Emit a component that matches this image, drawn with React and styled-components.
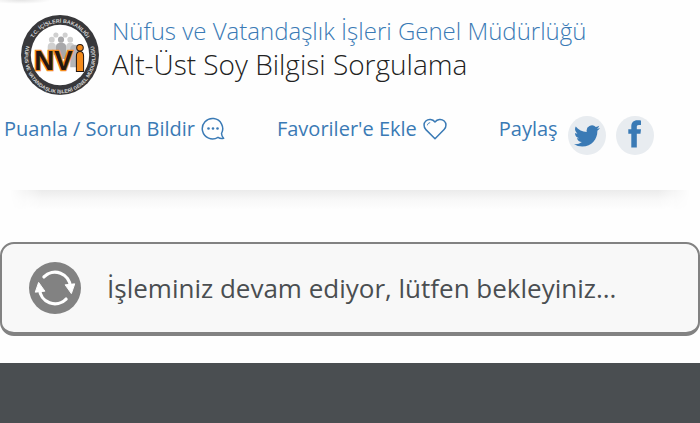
import React from "react";
import styled, { createGlobalStyle } from "styled-components";

const GlobalStyle = createGlobalStyle`
  * {
    box-sizing: border-box;
  }

  html, body, #root {
    height: 100%;
  }

  body {
    margin: 0;
    background: #fefefe;
    color: #4a4e51;
    font-family: "Open Sans", "Noto Sans", sans-serif;
  }
`;

const Logo = () => (
  <LogoSvg viewBox="0 0 78 80" role="img" aria-label="NVİ">
    <defs>
      <path id="ringTop" d="M8.500 40 A30.500 31.500 0 0 1 69.500 40" />
      <path id="ringBottom" d="M6.500 30 A34.500 35.500 0 1 0 71.500 30" />
    </defs>
    <ellipse cx="39" cy="40" rx="38" ry="39" fill="#38383b" />
    <ellipse cx="39" cy="40" rx="28.500" ry="29.500" fill="#fff" />
    <g fill="#d8d8d8" fontFamily="Liberation Sans, sans-serif" fontWeight="700" textAnchor="middle">
      <text fontSize="5.200">
        <textPath href="#ringTop" startOffset="50%">T.C. İÇİŞLERİ BAKANLIĞI</textPath>
      </text>
      <text fontSize="5">
        <textPath href="#ringBottom" startOffset="50%">NÜFUS VE VATANDAŞLIK İŞLERİ GENEL MÜDÜRLÜĞÜ</textPath>
      </text>
    </g>
    <g fill="#d0d0d0">
      <circle cx="35" cy="20.500" r="2.500" />
      <circle cx="44" cy="20.500" r="2.500" />
      <circle cx="31" cy="25" r="2.800" />
      <circle cx="49" cy="25" r="2.800" />
      <path d="M27 40V32q0-4 4-4t4 4v8zM45 40V32q0-4 4-4t4 4v8z" />
    </g>
    <g fill="#a8a8aa">
      <circle cx="40" cy="25" r="3" />
      <path d="M35 44V32q0-4 5-4t5 4v12z" />
    </g>
    <path d="M49 34q0-4 4.500-4t4.500 4v18H49z" fill="#b5b5b7" />
    <text
      x="14"
      y="55"
      fill="#241611"
      stroke="#f28a1c"
      strokeWidth="2.400"
      paintOrder="stroke"
      fontFamily="Liberation Sans, sans-serif"
      fontWeight="700"
      fontSize="27"
    >
      NV
    </text>
    <circle cx="58.500" cy="33" r="3.200" fill="#f28a1c" stroke="#241611" strokeWidth="1" />
    <path d="M55 56V41q0-4.500 3.500-4.500t3.500 4.500v15z" fill="#f28a1c" stroke="#241611" strokeWidth="1" />
  </LogoSvg>
);

const CommentIcon = () => (
  <LineIcon viewBox="0 0 24 24" aria-hidden="true">
    <path d="M20.500 16.500A10.200 10.200 0 1 0 17 20.300C18.700 21.500 20.800 21.800 22.600 21.300C21.300 20 20.600 18.500 20.500 16.500Z" />
    <g fill="currentColor" stroke="none">
      <circle cx="7.500" cy="11.500" r="1.300" />
      <circle cx="12" cy="11.500" r="1.300" />
      <circle cx="16.500" cy="11.500" r="1.300" />
    </g>
  </LineIcon>
);

const HeartIcon = () => (
  <LineIcon viewBox="0 0 24 24" aria-hidden="true">
    <path d="M12 21.800L2.900 12.600C0.300 9.900 0.600 6 2.800 4C5.500 1.600 9.700 2 12 5C14.300 2 18.500 1.600 21.200 4C23.400 6 23.700 9.900 21.100 12.600Z" />
    <path d="M4.400 8.300C4.600 6.700 5.600 5.800 7.200 5.700" strokeWidth="1" />
  </LineIcon>
);

const TwitterIcon = () => (
  <svg width="26" height="26" viewBox="0 0 24 24" fill="currentColor" aria-hidden="true">
    <path d="M23.950 4.570a10 10 0 0 1-2.820.77 4.960 4.960 0 0 0 2.160-2.720c-.95.55-2 .95-3.130 1.180a4.920 4.920 0 0 0-8.380 4.480C7.690 8.090 4.070 6.130 1.640 3.160a4.920 4.920 0 0 0 1.520 6.570 4.900 4.900 0 0 1-2.230-.61v.06a4.920 4.920 0 0 0 3.950 4.830 5 5 0 0 1-2.210.08 4.940 4.940 0 0 0 4.600 3.420A9.870 9.870 0 0 1 0 19.540a13.990 13.990 0 0 0 7.560 2.210c9.050 0 14-7.500 14-13.980 0-.21 0-.42-.02-.63a9.940 9.940 0 0 0 2.410-2.570z" />
  </svg>
);

const FacebookIcon = () => (
  <svg width="14" height="32" viewBox="0 0 14 32" fill="currentColor" aria-hidden="true">
    <path d="M13 .5V5H10.800C9.200 5 8.800 5.700 8.800 7V9.300H13L12.500 13.700H8.800V27.500H3.300V13.700H.3V9.300H3.300V6.400C3.300 2.500 5.700 .3 9.300 .3C11 .3 12.500 .4 13 .5Z" />
  </svg>
);

const RefreshIcon = () => (
  <SpinnerSvg viewBox="0 0 54 54" aria-hidden="true">
    <circle cx="27" cy="27" r="27" fill="#828282" />
    <g fill="none" stroke="#fff" strokeWidth="3.400" strokeLinecap="round">
      <path d="M15.500 15.500A16 16 0 0 1 43 26" />
      <path d="M38.500 38.500A16 16 0 0 1 11 28" />
    </g>
    <path d="M37.500 23.700L47.500 22.700L44 32.800Z" fill="#fff" stroke="#fff" strokeLinejoin="round" />
    <path d="M16.500 30.300L6.500 31.300L10 21.200Z" fill="#fff" stroke="#fff" strokeLinejoin="round" />
  </SpinnerSvg>
);

export default function App() {
  return (
    <Page>
      <GlobalStyle />
      <Header>
        <Logo />
        <Titles>
          <Agency href="#">Nüfus ve Vatandaşlık İşleri Genel Müdürlüğü</Agency>
          <Service>Alt-Üst Soy Bilgisi Sorgulama</Service>
        </Titles>
      </Header>
      <Actions>
        <Action type="button">
          Puanla / Sorun Bildir <CommentIcon />
        </Action>
        <Action type="button">
          Favoriler'e Ekle <HeartIcon />
        </Action>
        <Share>
          <span>Paylaş</span>
          <ShareLink href="#" aria-label="Twitter">
            <TwitterIcon />
          </ShareLink>
          <ShareLink href="#" aria-label="Facebook">
            <FacebookIcon />
          </ShareLink>
        </Share>
      </Actions>
      <Divider />
      <Notice role="status">
        <RefreshIcon />
        <p>İşleminiz devam ediyor, lütfen bekleyiniz...</p>
      </Notice>
      <Footer />
    </Page>
  );
}

const Page = styled.div`
  min-height: 100%;
  display: flex;
  flex-direction: column;
  background: radial-gradient(ellipse at 40% 0, #e4e4e4, transparent 70%) 0 0 / 52px 4px no-repeat;
`;

const Header = styled.header`
  display: flex;
  gap: 12px;
  padding: 14px 20px 0;
`;

const LogoSvg = styled.svg`
  width: 80px;
  height: 82px;
  flex-shrink: 0;
`;

const Titles = styled.div`
  display: flex;
  flex-direction: column;
  font-weight: 300;
`;

const Agency = styled.a`
  color: #3a7ab5;
  font-size: 24px;
  line-height: 34px;
  text-decoration: none;
`;

const Service = styled.h1`
  margin: 0;
  color: #222;
  font-size: 28px;
  font-weight: 300;
  line-height: 32px;
`;

const Actions = styled.div`
  display: flex;
  align-items: flex-start;
  gap: 52px;
  padding: 20px 4px 0;
  color: #3a7ab5;
  font-size: 20px;
  line-height: 26px;
`;

const Action = styled.button`
  display: flex;
  align-items: center;
  gap: 6px;
  padding: 0;
  border: 0;
  background: none;
  color: inherit;
  font: inherit;
  cursor: pointer;
`;

const LineIcon = styled.svg`
  width: 24px;
  height: 24px;
  fill: none;
  stroke: currentColor;
  stroke-width: 1.5;
  stroke-linejoin: round;
`;

const Share = styled.div`
  display: flex;
  gap: 10px;
`;

const ShareLink = styled.a`
  display: flex;
  align-items: center;
  justify-content: center;
  width: 38px;
  height: 39px;
  border-radius: 50%;
  background: #e8ecf0;
  color: #3a7ab5;
`;

const Divider = styled.div`
  height: 20px;
  margin: 35px 10px 0;
  background: linear-gradient(#ebebeb, #f8f8f8 50%, #fefefe);
  mask-image: linear-gradient(to right, transparent, #000 32px, #000 calc(100% - 32px), transparent);
`;

const Notice = styled.section`
  display: flex;
  align-items: center;
  gap: 26px;
  margin-top: 32px;
  padding: 18px 27px;
  border: 2px solid #828282;
  border-bottom-width: 4px;
  border-radius: 14px;
  background: #f8f8f8;
  font-size: 26px;
  line-height: 36px;

  p {
    margin: 0;
  }
`;

const SpinnerSvg = styled.svg`
  width: 52px;
  height: 52px;
  flex-shrink: 0;
`;

const Footer = styled.footer`
  flex: 1;
  min-height: 60px;
  margin-top: 27px;
  background: #4a4e51;
`;
